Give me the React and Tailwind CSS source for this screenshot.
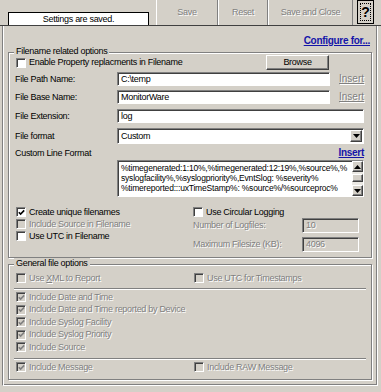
import clsx from 'clsx';

const dim = 'text-[#808080] [text-shadow:1px_1px_0_#ffffff]';
const sunken =
	'border border-t-[#808080] border-l-[#808080] border-b-white border-r-white shadow-[inset_1px_1px_0_#404040]';
const raised =
	'border border-t-white border-l-white border-b-[#404040] border-r-[#404040] shadow-[inset_-1px_-1px_0_#808080]';

function Box({ checked, disabled }) {
	return (
		<span
			className={clsx(
				'w-[10px] h-[10px] shrink-0 flex items-center justify-center',
				sunken,
				disabled ? 'bg-[#d4d0c8]' : 'bg-white'
			)}
		>
			{checked && (
				<svg width="7" height="7" viewBox="0 0 7 7">
					<path
						d="M0.8 3.2 L2.6 5 L6.2 1.4"
						fill="none"
						stroke={disabled ? '#808080' : '#000'}
						strokeWidth="1.6"
					/>
				</svg>
			)}
		</span>
	);
}

function Check({ checked, disabled, children, className }) {
	return (
		<div className={clsx('flex items-center', className)}>
			<Box checked={checked} disabled={disabled} />
			<span className={clsx('ml-[3px] whitespace-nowrap', disabled && dim)}>{children}</span>
		</div>
	);
}

function Group({ label, className, children }) {
	return (
		<div
			className={clsx(
				'relative ml-[5px] w-[364px] border border-[#808080] shadow-[inset_1px_1px_0_#fff,1px_1px_0_#fff] pl-[6px]',
				className
			)}
		>
			<span className="absolute -top-[7px] left-[5px] px-[2px] bg-[#d4d0c8] leading-[11px]">{label}</span>
			{children}
		</div>
	);
}

function Arrow({ up }) {
	return (
		<svg width="7" height="4" viewBox="0 0 7 4">
			<path d={up ? 'M3.5 0 L7 4 L0 4 Z' : 'M0 0 L7 0 L3.5 4 Z'} fill="#000" />
		</svg>
	);
}

function Sep() {
	return <div className="-ml-[1px] w-[352px] h-[2px] border-t border-t-[#808080] border-b border-b-white" />;
}

export default function App() {
	return (
		<div className="w-[381px] h-[392px] bg-[#d4d0c8] overflow-hidden font-['Liberation_Sans',Arial,sans-serif] text-[9px] tracking-[-0.3px] text-black leading-none">
			{/* toolbar */}
			<div className="flex h-[26px] border-b border-[#404040]">
				<div className="w-[156px] pt-[12px] pl-[8px]">
					<div className="w-[141px] h-[13px] border border-b-0 border-black bg-white flex items-center justify-center">
						Settings are saved.
					</div>
				</div>
				<div className={clsx('w-[62px] flex items-center justify-center border-l border-l-white border-r border-r-[#808080]', dim)}>
					Save
				</div>
				<div className={clsx('w-[50px] flex items-center justify-center border-l border-l-white border-r border-r-[#808080]', dim)}>
					Reset
				</div>
				<div className={clsx('w-[85px] flex items-center justify-center border-l border-l-white border-r border-r-[#808080]', dim)}>
					Save and Close
				</div>
				<div className="ml-[4px] w-[17px] h-[24px] border border-black p-[2px]">
					<div className="w-full h-full border border-dotted border-black flex items-center justify-center text-[14px] font-bold">
						?
					</div>
				</div>
			</div>

			{/* panel */}
			<div className="ml-[2px] w-[376px] h-[360px] border-l border-l-[#808080] border-r border-r-white border-b border-b-white shadow-[inset_1px_0_0_#fff,inset_-1px_-1px_0_#808080]">
				<div className="flex justify-end pt-[10px] pr-[7px] h-[21px]">
					<span className="text-[10px] font-bold underline text-[#1414a8]">Configure for...</span>
				</div>

				<Group label="Filename related options" className="mt-[5px] h-[206px] pt-[2px]">
					<div className="flex items-center h-[15px]">
						<div className="w-[251px]">
							<Check className="ml-[1px]">Enable Property replacments in Filename</Check>
						</div>
						<div className={clsx('w-[63px] h-[15px] flex items-center justify-center', raised)}>Browse</div>
					</div>

					<div className="flex items-center h-[14px] mt-[2px]">
						<span className="w-[102px]">File Path Name:</span>
						<div className={clsx('w-[213px] h-[14px] bg-white px-[3px] flex items-center', sunken)}>C:\temp</div>
						<span className={clsx('ml-[9px] text-[10px] tracking-normal underline', dim)}>Insert</span>
					</div>
					<div className="flex items-center h-[14px] mt-[4px]">
						<span className="w-[102px]">File Base Name:</span>
						<div className={clsx('w-[213px] h-[14px] bg-white px-[3px] flex items-center', sunken)}>MonitorWare</div>
						<span className={clsx('ml-[9px] text-[10px] tracking-normal underline', dim)}>Insert</span>
					</div>
					<div className="flex items-center h-[14px] mt-[5px]">
						<span className="w-[102px]">File Extension:</span>
						<div className={clsx('w-[247px] h-[14px] bg-white px-[3px] flex items-center', sunken)}>log</div>
					</div>
					<div className="flex items-center h-[16px] mt-[5px]">
						<span className="w-[102px]">File format</span>
						<div className={clsx('w-[247px] h-[16px] bg-white pl-[3px] pr-[1px] flex items-center', sunken)}>
							<span className="flex-1">Custom</span>
							<span className={clsx('w-[12px] h-[12px] bg-[#d4d0c8] flex items-center justify-center', raised)}>
								<Arrow />
							</span>
						</div>
					</div>
					<div className="flex items-center justify-between w-[349px] h-[10px] mt-[4px]">
						<span>Custom Line Format</span>
						<span className="text-[10px] font-bold underline text-[#1414a8]">Insert</span>
					</div>
					<div className={clsx('ml-[102px] mt-[2px] w-[247px] h-[37px] bg-white flex', sunken)}>
						<div className="flex-1 pl-[3px] pt-[2px] text-[8.5px] tracking-[-0.2px] leading-[10px] whitespace-nowrap overflow-hidden">
							<div>%timegenerated:1:10%,%timegenerated:12:19%,%source%,%</div>
							<div>syslogfacility%,%syslogpriority%,EvntSlog: %severity%</div>
							<div>%timereported:::uxTimeStamp%: %source%/%sourceproc%</div>
						</div>
						<div className="w-[11px] flex flex-col bg-[#ebe9e4]">
							<span className={clsx('h-[11px] bg-[#d4d0c8] flex items-center justify-center', raised)}>
								<Arrow up />
							</span>
							<span className={clsx('mt-[2px] h-[8px] bg-[#d4d0c8]', raised)} />
							<span className={clsx('mt-auto h-[11px] bg-[#d4d0c8] flex items-center justify-center', raised)}>
								<Arrow />
							</span>
						</div>
					</div>

					<div className="flex mt-[9px]">
						<div className="w-[178px] flex flex-col">
							<Check checked className="h-[12px] ml-[1px]">Create unique filenames</Check>
							<Check disabled className="h-[12px] ml-[1px]">Include Source in Filename</Check>
							<Check className="h-[12px] ml-[1px]">Use UTC in Filename</Check>
						</div>
						<div className="flex flex-col">
							<Check className="h-[12px]">Use Circular Logging</Check>
							<div className="flex items-center h-[15px]">
								<span className={clsx('w-[109px]', dim)}>Number of Logfiles:</span>
								<div className={clsx('w-[57px] h-[15px] px-[3px] flex items-center', sunken, dim)}>10</div>
							</div>
							<div className="flex items-center h-[15px] mt-[4px]">
								<span className={clsx('w-[109px]', dim)}>Maximum Filesize (KB):</span>
								<div className={clsx('w-[57px] h-[15px] px-[3px] flex items-center', sunken, dim)}>4096</div>
							</div>
						</div>
					</div>
				</Group>

				<Group label="General file options" className="mt-[6px] h-[116px] pt-[7px]">
					<div className="flex h-[12px]">
						<Check disabled className="w-[178px] ml-[1px]">
							Use <span className="underline">X</span>ML to Report
						</Check>
						<Check disabled>Use UTC for Timestamps</Check>
					</div>
					<div className="mt-[4px]">
						<Sep />
					</div>
					<div className="mt-[1px] flex flex-col">
						<Check checked disabled className="h-[12.5px] ml-[1px]">Include Date and Time</Check>
						<Check checked disabled className="h-[12.5px] ml-[1px]">Include Date and Time reported by Device</Check>
						<Check checked disabled className="h-[12.5px] ml-[1px]">Include Syslog Facility</Check>
						<Check checked disabled className="h-[12.5px] ml-[1px]">Include Syslog Priority</Check>
						<Check checked disabled className="h-[12.5px] ml-[1px]">Include Source</Check>
					</div>
					<div className="mt-[4.5px]">
						<Sep />
					</div>
					<div className="flex h-[12px] mt-[1px]">
						<Check checked disabled className="w-[178px] ml-[1px]">Include Message</Check>
						<Check disabled>Include RAW Message</Check>
					</div>
				</Group>
			</div>
		</div>
	);
}
